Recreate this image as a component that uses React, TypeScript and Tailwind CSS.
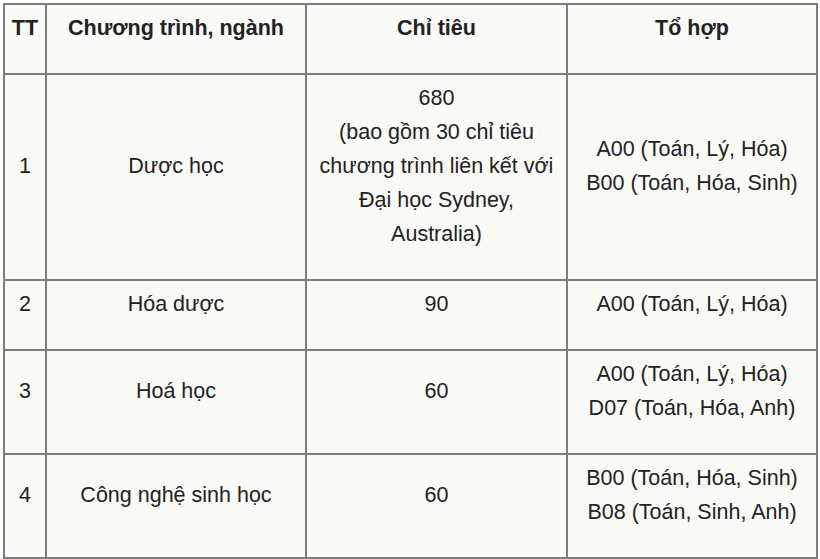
const rows = [
  {
    tt: "1",
    name: "Dược học",
    quota: ["680", "(bao gồm 30 chỉ tiêu", "chương trình liên kết với", "Đại học Sydney,", "Australia)"],
    combos: ["A00 (Toán, Lý, Hóa)", "B00 (Toán, Hóa, Sinh)"],
  },
  { tt: "2", name: "Hóa dược", quota: ["90"], combos: ["A00 (Toán, Lý, Hóa)"] },
  { tt: "3", name: "Hoá học", quota: ["60"], combos: ["A00 (Toán, Lý, Hóa)", "D07 (Toán, Hóa, Anh)"] },
  { tt: "4", name: "Công nghệ sinh học", quota: ["60"], combos: ["B00 (Toán, Hóa, Sinh)", "B08 (Toán, Sinh, Anh)"] },
];

const cell = "border-2 border-[#7d7d7d] text-center align-middle pt-[6px] pb-[28px] px-1";

export default function App() {
  return (
    <div
      className="w-[820px] h-[559px] bg-[#fdfdfb] p-[3px] text-[#222] text-[21.5px] leading-[34px]"
      style={{ fontFamily: '"Liberation Sans", Arial, sans-serif' }}
    >
      <table className="w-[813px] table-fixed border-collapse bg-[#fafaf7]">
        <colgroup>
          <col className="w-[42px]" />
          <col className="w-[260px]" />
          <col className="w-[261px]" />
          <col className="w-[250px]" />
        </colgroup>
        <thead>
          <tr className="font-bold">
            <th className={cell}>TT</th>
            <th className={cell}>Chương trình, ngành</th>
            <th className={cell}>Chỉ tiêu</th>
            <th className={cell}>Tổ hợp</th>
          </tr>
        </thead>
        <tbody>
          {rows.map((r) => (
            <tr key={r.tt}>
              <td className={cell}>{r.tt}</td>
              <td className={cell}>{r.name}</td>
              <td className={cell}>
                {r.quota.map((q) => (
                  <div key={q}>{q}</div>
                ))}
              </td>
              <td className={cell}>
                {r.combos.map((c) => (
                  <div key={c}>{c}</div>
                ))}
              </td>
            </tr>
          ))}
        </tbody>
      </table>
    </div>
  );
}
